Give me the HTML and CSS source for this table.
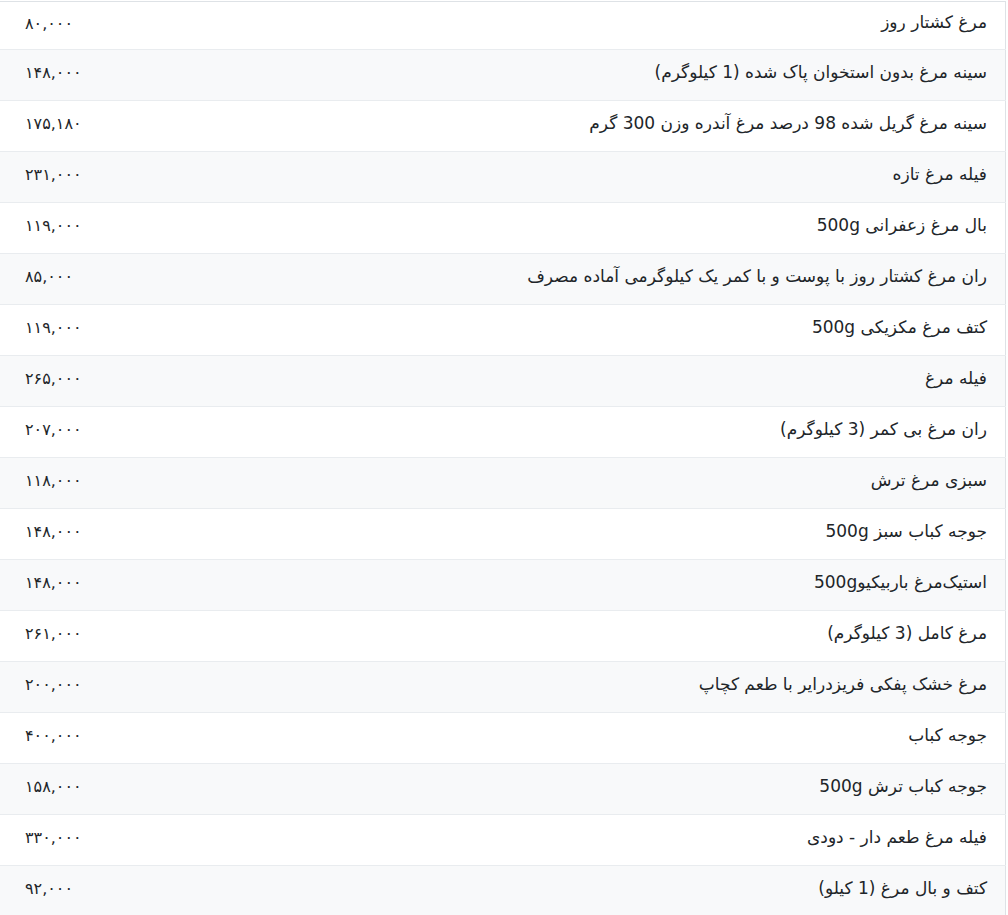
FILE: index.html
```html
<!DOCTYPE html>
<html lang="fa" dir="rtl">
<head>
<meta charset="utf-8">
<link rel="stylesheet" href="styles.css">
<title>قیمت مرغ</title>
</head>
<body>
<table class="prices">
<tbody>
<tr><td class="name">مرغ کشتار روز</td><td class="price">۸۰,۰۰۰</td></tr>
<tr><td class="name">سینه مرغ بدون استخوان پاک شده (1 کیلوگرم)</td><td class="price">۱۴۸,۰۰۰</td></tr>
<tr><td class="name">سینه مرغ گریل شده 98 درصد مرغ آندره وزن 300 گرم</td><td class="price">۱۷۵,۱۸۰</td></tr>
<tr><td class="name">فیله مرغ تازه</td><td class="price">۲۳۱,۰۰۰</td></tr>
<tr><td class="name">بال مرغ زعفرانی 500g</td><td class="price">۱۱۹,۰۰۰</td></tr>
<tr><td class="name">ران مرغ کشتار روز با پوست و با کمر یک کیلوگرمی آماده مصرف</td><td class="price">۸۵,۰۰۰</td></tr>
<tr><td class="name">کتف مرغ مکزیکی 500g</td><td class="price">۱۱۹,۰۰۰</td></tr>
<tr><td class="name">فیله مرغ</td><td class="price">۲۶۵,۰۰۰</td></tr>
<tr><td class="name">ران مرغ بی کمر (3 کیلوگرم)</td><td class="price">۲۰۷,۰۰۰</td></tr>
<tr><td class="name">سبزی مرغ ترش</td><td class="price">۱۱۸,۰۰۰</td></tr>
<tr><td class="name">جوجه کباب سبز 500g</td><td class="price">۱۴۸,۰۰۰</td></tr>
<tr><td class="name">استیک‌مرغ باربیکیو500g</td><td class="price">۱۴۸,۰۰۰</td></tr>
<tr><td class="name">مرغ کامل (3 کیلوگرم)</td><td class="price">۲۶۱,۰۰۰</td></tr>
<tr><td class="name">مرغ خشک پفکی فریزدرایر با طعم کچاپ</td><td class="price">۲۰۰,۰۰۰</td></tr>
<tr><td class="name">جوجه کباب</td><td class="price">۴۰۰,۰۰۰</td></tr>
<tr><td class="name">جوجه کباب ترش 500g</td><td class="price">۱۵۸,۰۰۰</td></tr>
<tr><td class="name">فیله مرغ طعم دار - دودی</td><td class="price">۳۳۰,۰۰۰</td></tr>
<tr><td class="name">کتف و بال مرغ (1 کیلو)</td><td class="price">۹۲,۰۰۰</td></tr>
</tbody>
</table>
</body>
</html>
```

FILE: styles.css
```css
html, body {
  margin: 0;
  padding: 0;
  background: #ffffff;
}

body {
  font-family: "DejaVu Sans", sans-serif;
  font-size: 17px;
  color: #212529;
}

.prices {
  width: 1006px;
  border-collapse: collapse;
  margin: 1px 2px 0 0;
  border-top: 1px solid #dee2e6;
  border-right: 1px solid #dee2e6;
}

.prices tr {
  height: 51px;
}

.prices tr:first-child {
  height: 48px;
}

.prices tr:nth-child(even) {
  background: #f8f9fa;
}

.prices td {
  border-bottom: 1px solid #e9ecef;
  padding: 0 0 7px;
  vertical-align: middle;
  white-space: nowrap;
}

.prices .name {
  text-align: right;
  padding-right: 18px;
}

.prices .price {
  text-align: left;
  padding-left: 25px;
  padding-bottom: 5px;
  width: 200px;
  font-size: 16px;
}
```
